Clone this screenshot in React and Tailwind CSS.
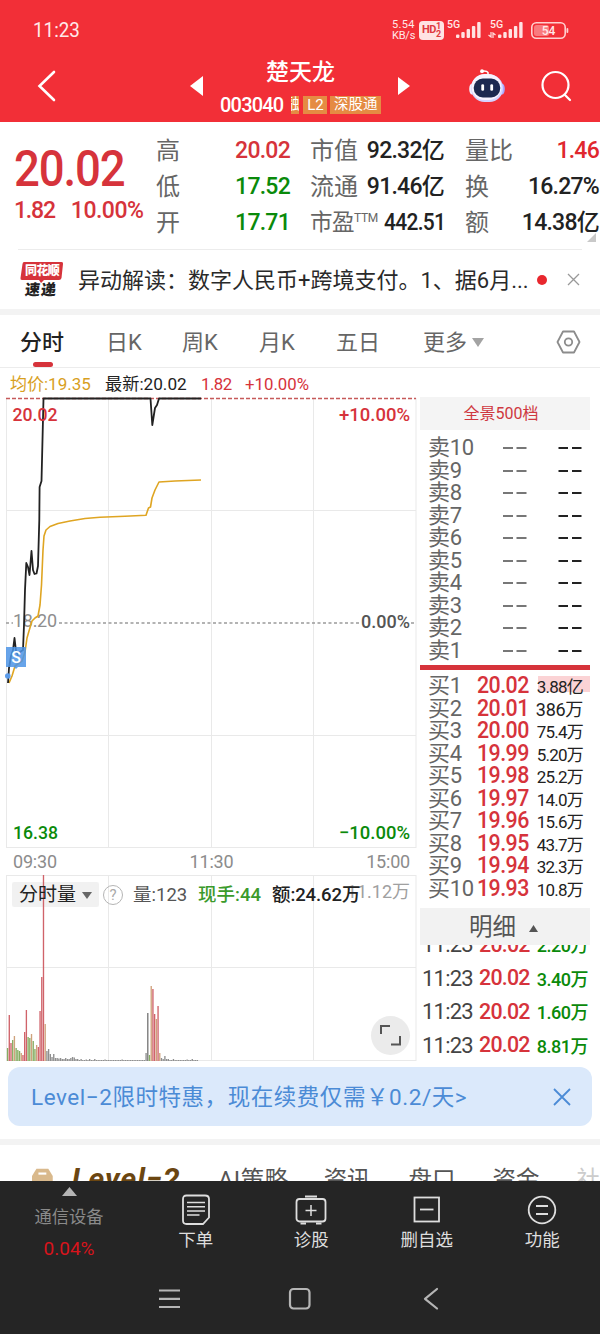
import React from 'react';

const sellRows = [10, 9, 8, 7, 6, 5, 4, 3, 2, 1];

const buyRows = [
  { price: '20.02', vol: '3.88亿' },
  { price: '20.01', vol: '386万' },
  { price: '20.00', vol: '75.4万' },
  { price: '19.99', vol: '5.20万' },
  { price: '19.98', vol: '25.2万' },
  { price: '19.97', vol: '14.0万' },
  { price: '19.96', vol: '15.6万' },
  { price: '19.95', vol: '43.7万' },
  { price: '19.94', vol: '32.3万' },
  { price: '19.93', vol: '10.8万' },
];

const trades = ['2.20万', '3.40万', '1.60万', '8.81万'];

const RED = '#d0636a';
const GREEN = '#86ad62';
const GRAY = '#8f8f8f';
const TAN = '#cfa27c';

// one bar per minute: [height, color]
const volumes = [
  [13, GREEN], [46, RED], [18, RED], [21, GREEN], [25, TAN], [13, GREEN], [11, GREEN], [10, GREEN],
  [8, TAN], [6, RED], [29, RED], [51, RED], [24, GREEN], [23, GREEN], [27, TAN], [20, GREEN],
  [12, GREEN], [16, TAN], [14, RED], [50, RED], [84, RED], [186, RED], [37, TAN], [10, GRAY],
  [12, GRAY], [7, GRAY], [4, GRAY], [7, GRAY], [3, GRAY], [3, GRAY], [2.5, GRAY], [3, GRAY],
  [2, GRAY], [2, GRAY], [3, GRAY], [2, GRAY], [2, GRAY], [3, GRAY], [4, GRAY], [3.5, GRAY],
  [2, GRAY], [2, GRAY], [1, GRAY], [2, GRAY], [1, GRAY], [1, GRAY], [1.5, GRAY], [1, GRAY],
  [2, GRAY], [1, GRAY], [1, GRAY], [2, GRAY], [1, GRAY], [1, GRAY], [1, GRAY], [1, GRAY],
  [1, GRAY], [1.5, GRAY], [1, GRAY], [1, GRAY], [1, GRAY], [1, GRAY], [1, GRAY], [1, GRAY],
  [1, GRAY], [1, GRAY], [1, GRAY], [1.5, GRAY], [1, GRAY], [1, GRAY], [1, GRAY], [1, GRAY],
  [1, GRAY], [1, GRAY], [1, GRAY], [1, GRAY], [1, GRAY], [1, GRAY], [1, GRAY], [1, GRAY],
  [1, GRAY], [8, GRAY], [48, '#777777'], [6, GREEN], [75, TAN], [72, RED], [47, RED], [42, TAN],
  [55, RED], [8, TAN], [3, GRAY], [2, GRAY], [5, GRAY], [2, GRAY], [2, GRAY], [1, GRAY],
  [1, GRAY], [2, GRAY], [1, GRAY], [1, GRAY], [1, GRAY], [1, GRAY], [1, GRAY], [1, GRAY],
  [1, GRAY], [1.5, GRAY], [1, GRAY], [1, GRAY], [2, GRAY], [1, GRAY], [1, GRAY], [1, GRAY],
];

const Signal = () => (
  <svg width="26" height="16" viewBox="0 0 26 16" fill="#ffe3e3">
    <rect x="0" y="12.5" width="3.4" height="3.5" rx="1" />
    <rect x="5.3" y="10" width="3.4" height="6" rx="1" />
    <rect x="10.6" y="7" width="3.4" height="9" rx="1" />
    <rect x="15.9" y="4" width="3.4" height="12" rx="1" />
    <rect x="21.2" y="0" width="3.4" height="16" rx="1" />
  </svg>
);

const StatusBar = () => (
  <div className="flex h-[60px] items-center pl-[33px] text-[#ffe9e9]">
    <span className="origin-left scale-x-[0.94] text-[20px]">11:23</span>
    <div className="ml-auto flex w-[208px] items-center">
      <div className="w-[24px] pt-px text-[11px] leading-[10.5px] whitespace-nowrap">
        <div className="tracking-[0.3px]">5.54</div>
        <div className="tracking-[-0.2px]">KB/s</div>
      </div>
      <div className="ml-[3px] flex h-[19px] w-[25px] items-center justify-center rounded-[4px] bg-[#ffe3e3] text-[#e03a40]">
        <span className="text-[11px] font-bold tracking-[-0.5px]">HD</span>
        <span className="text-[9px] leading-[8px] font-bold">
          1<br />2
        </span>
      </div>
      <div className="relative ml-[12px] h-[19px] w-[26px] pt-px">
        <span className="absolute -top-[1px] -left-[9px] text-[10.5px] leading-[10px] font-medium">5G</span>
        <Signal />
      </div>
      <div className="relative ml-[16px] h-[19px] w-[26px] pt-px">
        <span className="absolute -top-[1px] -left-[8px] text-[10.5px] leading-[10px] font-medium">5G</span>
        <svg className="absolute top-[11px] -left-[10px]" width="8" height="6" viewBox="0 0 8 6" stroke="#ffe3e3" strokeWidth="1.2" fill="none">
          <path d="M3 0v5L0.5 3M5 6V1L7.5 3" />
        </svg>
        <Signal />
      </div>
      <svg className="ml-[7px]" width="38" height="17" viewBox="0 0 38 17">
        <rect x="0.8" y="0.8" width="33.4" height="15.4" rx="4.5" fill="none" stroke="#ffd0d0" strokeWidth="1.6" />
        <rect x="3" y="3" width="15" height="11" rx="2.5" fill="#f97a7e" />
        <rect x="35.5" y="6" width="1.8" height="5" rx="0.9" fill="#ffd0d0" />
        <text x="17.5" y="12.6" fontSize="12" fontWeight="500" textAnchor="middle" fill="#ffe9e9">54</text>
      </svg>
    </div>
  </div>
);

const Robot = () => (
  <svg width="36" height="34" viewBox="0 0 36 34">
    <path d="M19 6V3.5Q18 1.5 13 2" fill="none" stroke="#fff" strokeWidth="1.5" />
    <circle cx="13" cy="2.2" r="1.9" fill="#fff" />
    <ellipse cx="3" cy="20" rx="2.8" ry="5.5" fill="#f1efff" />
    <ellipse cx="33" cy="20" rx="2.8" ry="5.5" fill="#a9a9ff" />
    <rect x="2" y="5.5" width="32" height="27.5" rx="13.5" fill="#d5d3ff" />
    <rect x="2.5" y="5" width="30" height="26" rx="13" fill="#f6f4ff" />
    <rect x="4.8" y="9.5" width="26.4" height="19" rx="9" fill="#1c2950" />
    <rect x="12.3" y="15.2" width="2.8" height="6.6" rx="1.3" fill="#fff" />
    <rect x="21.3" y="15.2" width="2.8" height="6.6" rx="1.3" fill="#fff" />
  </svg>
);

const Header = () => (
  <header className="h-[122px] bg-[#f22f37]">
    <StatusBar />
    <div className="flex h-[52px] items-center text-white">
      <svg className="ml-[37px]" width="19" height="32" viewBox="0 0 19 32" fill="none" stroke="#fff" strokeWidth="2.6" strokeLinecap="round">
        <path d="M17 2L2.5 16L17 30" />
      </svg>
      <svg className="ml-[134px]" width="13" height="20" viewBox="0 0 13 20" fill="#fff">
        <path d="M13 0v20L0 10z" />
      </svg>
      <div className="ml-[17px] w-[161px] pt-[6px]">
        <div className="text-center text-[23px] leading-[32px] font-medium">楚天龙</div>
        <div className="flex h-[32px] items-center">
          <span className="w-[71px] text-[20px] font-medium tracking-[-0.8px]">003040</span>
          <span className="flex h-[18px] w-[9px] justify-end overflow-hidden bg-[#e58b43] text-[15px] leading-[17px]">融</span>
          <span className="ml-[4px] h-[18px] w-[24px] bg-[#e58b43] text-center text-[15px] leading-[18px]">L2</span>
          <span className="ml-[3px] h-[18px] w-[51px] bg-[#e58b43] text-center text-[14.5px] leading-[17px] whitespace-nowrap">深股通</span>
        </div>
      </div>
      <svg className="ml-[17px]" width="12" height="18" viewBox="0 0 12 18" fill="#fff">
        <path d="M0 0v18L12 9z" />
      </svg>
      <div className="ml-[59px]">
        <Robot />
      </div>
      <svg className="ml-[36px]" width="31" height="32" viewBox="0 0 31 32" fill="none" stroke="#fff" strokeWidth="2.2" strokeLinecap="round">
        <circle cx="14.5" cy="15" r="13" />
        <path d="M24 25l5 5" />
      </svg>
    </div>
  </header>
);

const Stat = ({ label, sup, value, color = 'text-[#222]' }) => (
  <div className="flex h-[36px] items-center justify-between whitespace-nowrap">
    {sup ? (
      <span className="text-[22.5px] tracking-[-0.5px] text-[#666]">
        {label}
        <sup className="top-[-8px] text-[12px] leading-none tracking-[-0.3px]">{sup}</sup>
      </span>
    ) : (
      <span className="text-[24px] text-[#666]">{label}</span>
    )}
    <span
      className={`origin-right font-medium ${sup ? 'scale-x-[0.91] text-[23px] tracking-[-0.75px]' : 'text-[23px] tracking-[-0.75px]'} ${color}`}
    >
      {value}
    </span>
  </div>
);

const Quote = () => (
  <section className="relative h-[127px]">
    <div className="flex pt-[10px]">
      <div className="ml-[14px] w-[142px] pt-[12px] text-[#d6333b]">
        <div className="origin-left scale-x-[0.91] text-[50px] leading-[50px] font-medium tracking-[-1.2px]">20.02</div>
        <div className="mt-[3px] flex gap-[16px] text-[23px] leading-[28px] font-medium">
          <span className="tracking-[-1.2px]">1.82</span>
          <span className="tracking-[-0.5px]">10.00%</span>
        </div>
      </div>
      <div className="w-[134px] pt-px">
        <Stat label="高" value="20.02" color="text-[#d6333b]" />
        <Stat label="低" value="17.52" color="text-[#0a8a0a]" />
        <Stat label="开" value="17.71" color="text-[#0a8a0a]" />
      </div>
      <div className="ml-[20px] w-[134px] pt-px">
        <Stat label="市值" value="92.32亿" />
        <Stat label="流通" value="91.46亿" />
        <Stat label="市盈" sup="TTM" value="442.51" />
      </div>
      <div className="ml-[21px] w-[134px] pt-px">
        <Stat label="量比" value="1.46" color="text-[#e0272e]" />
        <Stat label="换" value="16.27%" />
        <Stat label="额" value="14.38亿" />
      </div>
    </div>
    <svg className="absolute right-[4px] bottom-[7px]" width="9" height="9" viewBox="0 0 9 9">
      <path d="M9 0v9H0z" fill="#c9c9c9" />
    </svg>
  </section>
);

const News = () => (
  <section className="flex h-[60px] items-center">
    <div className="mx-[18px] flex h-full flex-1 items-center border-t border-[#ececec]">
      <div className="relative ml-[2px] h-[38px] w-[44px]">
        <svg className="absolute inset-0" width="44" height="38" viewBox="0 0 44 38">
          <path d="M4 1H41.5Q43.5 1 43 3L41.5 17Q41 19 39 19H24L21 22L19 19H2Q0 19 0.5 17L2.5 3Q2.8 1 4 1z" fill="#d6333b" />
        </svg>
        <span className="absolute top-[2px] left-[5px] text-[12px] leading-[16px] font-black tracking-[-0.6px] whitespace-nowrap text-white">同花顺</span>
        <span className="absolute top-[21px] left-[5px] -skew-x-6 text-[15px] leading-[16px] font-black tracking-[1px] whitespace-nowrap text-[#222]">速递</span>
      </div>
      <span className="ml-[14px] w-[452px] pt-[2px] text-[22px] whitespace-nowrap text-[#2a2a2a]">
        异动解读：数字人民币+跨境支付。1、据6月...
      </span>
      <span className="ml-[7px] h-[10px] w-[10px] rounded-full bg-[#e8272e]" />
      <svg className="ml-[20px]" width="13" height="13" viewBox="0 0 13 13" stroke="#999" strokeWidth="1.3">
        <path d="M1 1l11 11M12 1L1 12" />
      </svg>
    </div>
  </section>
);

const Tabs = () => (
  <nav className="flex h-[53px] items-center border-b border-[#ececec] pt-[2px] text-[22px] whitespace-nowrap text-[#666]">
    <div className="relative ml-[20px] w-[86px] font-medium text-[#222]">
      分时
      <span className="absolute top-[36px] left-[13px] h-[5px] w-[20px] rounded-full bg-[#d6333b]" />
    </div>
    <span className="w-[76px]">日K</span>
    <span className="w-[77px]">周K</span>
    <span className="w-[77px]">月K</span>
    <span className="w-[87px]">五日</span>
    <span>更多</span>
    <svg className="ml-[5px]" width="12" height="9" viewBox="0 0 12 9">
      <path d="M0 0h12L6 9z" fill="#a3a3a3" />
    </svg>
    <svg className="mr-[19px] ml-auto" width="25" height="24" viewBox="0 0 25 24" fill="none" stroke="#8c8c8c" strokeWidth="1.8" strokeLinejoin="round">
      <path d="M7 1.5h11L23.5 12L18 22.5H7L1.5 12z" />
      <circle cx="12.5" cy="12" r="3.7" />
    </svg>
  </nav>
);

const PriceChart = () => (
  <svg className="block" width="418" height="451" viewBox="0 397 418 451">
    <g stroke="#e9e9e9">
      <path d="M6.5 398V848M108.5 398V848M211.5 398V848M313.5 398V848M416 398V848" />
      <path d="M6 510.5H416M6 735.5H416M6 847.5H416" />
    </g>
    <path d="M6 398.5H416" stroke="#c65a5a" strokeDasharray="4 2" strokeWidth="1.3" />
    <path d="M6 623H13M59 623H361M411 623H416" stroke="#9a9a9a" strokeDasharray="3 2.5" strokeWidth="1.3" />
    <text x="13" y="627" fontSize="18" fill="#8e8e8e" textLength="44">18.20</text>
    <path
      d="M9 683L12 676L15 666L22 661L25 652L27 638L29 631L32 621L35 618L38 616L40 605L41.5 585L43 550L44 536L46 530L50 526.5L58 523.5L70 521L85 518.5L100 517.3L125 516.3L146 515.3L148.5 508L150.5 507L152 498L155 490L159 482L175 481L201 480"
      fill="none" stroke="#dfa522" strokeWidth="1.6" strokeLinejoin="round"
    />
    <path
      d="M8 683L9 668L11 656L13 650L14.5 638L16 651L18 655L20 652L23 650L24 625L25 590L26.3 563L28 567L29.5 575L31.5 551L33 570L34.5 574L36.5 573.5L38 566L39.3 520L39.6 487L41.5 481L43.5 398.5H150.5L152.3 425L155 408L157 405L159 398.5H201"
      fill="none" stroke="#222" strokeWidth="1.8" strokeLinejoin="round"
    />
    <circle cx="7.8" cy="676" r="2.8" fill="#5b9bea" />
    <path d="M6 647H26V667H18L16 669L14 667H6z" fill="#4c94e6" opacity="0.85" />
    <text x="16" y="663" fontSize="16" fontWeight="500" fill="#fff" textAnchor="middle">S</text>
    <g fontSize="18.5" fontWeight="500">
      <text x="12.5" y="421" fill="#d6333b" textLength="45" lengthAdjust="spacingAndGlyphs">20.02</text>
      <text x="339" y="421" fill="#d6333b" textLength="71" lengthAdjust="spacingAndGlyphs">+10.00%</text>
      <text x="361" y="627.5" fill="#555" textLength="49" fontSize="17.5" lengthAdjust="spacingAndGlyphs">0.00%</text>
      <text x="13" y="839" fill="#0a8a0a" textLength="45" lengthAdjust="spacingAndGlyphs">16.38</text>
      <text x="339" y="839" fill="#0a8a0a" textLength="71" lengthAdjust="spacingAndGlyphs">−10.00%</text>
    </g>
  </svg>
);

const VolumeChart = () => (
  <div className="relative h-[186px] w-[418px]">
    <svg className="block" width="418" height="186" viewBox="0 875 418 186">
      <path d="M6 875.5H416M6 967.5H416M6 1060.5H416M6.5 875V1061M108.5 875V1061M211.5 875V1061M313.5 875V1061M416 875V1061" stroke="#e9e9e9" />
      <rect x="12" y="882" width="87" height="25" rx="2" fill="#f0f0f0" opacity="0.9" />
      {volumes.map(([h, color], i) => (
        <rect key={i} x={6.9 + i * 1.71} y={1061 - h} width="1.35" height={h} fill={color} />
      ))}
    </svg>
    <div className="absolute inset-x-0 top-[7px] flex h-[26px] items-center text-[18.5px] whitespace-nowrap">
      <span className="ml-[19px] w-[63px] text-[19px] text-[#222]">分时量</span>
      <svg width="10" height="7" viewBox="0 0 10 7">
        <path d="M0 0h10L5 7z" fill="#666" />
      </svg>
      <span className="ml-[11px] flex h-[20px] w-[20px] items-center justify-center rounded-full border-[1.5px] border-[#b5b5b5] text-[15px] text-[#aaa]">?</span>
      <span className="ml-[10px] w-[65px] pt-px text-[#555]">量:123</span>
      <span className="w-[74px] pt-px font-medium text-[#3b9a2b]">现手:44</span>
      <span className="pt-px font-medium tracking-[-0.1px] text-[#222]">额:24.62万</span>
    </div>
    <span className="absolute top-[3px] right-[8px] -z-10 text-[18px] text-[#a0a0a0]">11.12万</span>
    <div className="absolute right-[8px] bottom-[6px] flex h-[39px] w-[39px] items-center justify-center rounded-full bg-[#ebebeb]">
      <svg width="21" height="21" viewBox="0 0 21 21" fill="none" stroke="#555" strokeWidth="2">
        <path d="M1 9V1H10M20 11V19.5H11" />
      </svg>
    </div>
  </div>
);

const OrderBook = () => (
  <aside className="flex h-[664px] w-[170px] flex-col whitespace-nowrap">
    <div className="h-[33px] shrink-0 bg-[#f4f4f4] text-center text-[16px] leading-[34px] text-[#cf3840]">
      <span className="mr-[8px]">全景500档</span>
    </div>
    <div className="mt-[7px]">
      {sellRows.map((n) => (
        <div key={n} className="flex h-[22.5px] items-center pl-[8px]">
          <span className="w-[74px] text-[22px] leading-[22px] tracking-[-0.3px] text-[#666]">卖{n}</span>
          <svg width="80" height="2" viewBox="0 0 80 2">
            <path d="M1 1h10M14.5 1h10" stroke="#777" strokeWidth="1.8" />
            <path d="M56.5 1h9.5M70 1h9.5" stroke="#222" strokeWidth="1.8" />
          </svg>
        </div>
      ))}
    </div>
    <div className="mt-[3px] h-[5px] shrink-0 bg-[#d6333b]" />
    <div className="mt-[5px]">
      {buyRows.map((row, i) => (
        <div key={i} className="relative flex h-[22.5px] items-center pl-[8px]">
          {i === 0 && <span className="absolute top-[1px] right-0 -z-10 h-[16px] w-[52px] bg-[#fbd3d5]" />}
          <span className="w-[49px] text-[22px] leading-[22px] tracking-[-0.3px] text-[#666]">买{i + 1}</span>
          <span className="w-[58px] origin-left scale-x-[0.93] text-[23px] leading-[22px] font-medium tracking-[-0.6px] text-[#d6333b]">{row.price}</span>
          <span className={`w-[48px] pt-[2px] text-right leading-[20px] text-[#222] ${i === 1 ? 'text-[18px] tracking-[-0.3px]' : 'text-[17px] tracking-[-0.8px]'}`}>{row.vol}</span>
        </div>
      ))}
    </div>
    <div className="mt-[8px] flex h-[37px] shrink-0 items-center bg-[#f2f2f2] pt-[3px] pl-[49px] text-[23.5px] text-[#555]">
      明细
      <svg className="ml-[13px]" width="9" height="7" viewBox="0 0 9 7">
        <path d="M0 7h9L4.5 0z" fill="#555" />
      </svg>
    </div>
    <div className="flex h-[117px] shrink-0 flex-col justify-end overflow-hidden">
      {trades.map((vol) => (
        <div key={vol} className="flex h-[33.5px] shrink-0 items-center pl-[2px]">
          <span className="w-[57px] text-[22px] tracking-[-0.8px] text-[#444]">11:23</span>
          <span className="w-[55px] origin-left scale-x-[0.95] text-[22.5px] font-medium tracking-[-0.8px] text-[#d6333b]">20.02</span>
          <span className="w-[54px] pt-[2px] text-right text-[18px] font-medium tracking-[-0.5px] text-[#0a8a0a]">{vol}</span>
        </div>
      ))}
    </div>
  </aside>
);

const ChartArea = () => (
  <section className="relative z-0">
    <div className="flex h-[29px] items-center pt-[5px] text-[16.8px] whitespace-nowrap">
      <span className="ml-[10px] w-[95px] text-[17px] text-[#d8a01e]">均价:19.35</span>
      <span className="w-[96px] text-[17.2px] text-[#222]">最新:20.02</span>
      <span className="w-[44px] tracking-[-0.5px] text-[#d6333b]">1.82</span>
      <span className="text-[#d6333b]">+10.00%</span>
    </div>
    <div className="flex h-[664px] gap-[2px]">
      <div className="w-[418px]">
        <PriceChart />
        <div className="flex h-[27px] items-center justify-between pr-[8px] pl-[13px] text-[18px] tracking-[-0.2px] text-[#8c8c8c]">
          <span>09:30</span>
          <span>11:30</span>
          <span>15:00</span>
        </div>
        <VolumeChart />
      </div>
      <OrderBook />
    </div>
  </section>
);

const Promo = () => (
  <div className="mx-[8px] mt-[6px] flex h-[59px] items-center justify-between rounded-[12px] bg-[#dbe9fb] pr-[21px] pl-[23px] text-[#4b8bd6]">
    <span className="pt-[3px] text-[22.5px] tracking-[0.55px] whitespace-nowrap">Level−2限时特惠，现在续费仅需￥0.2/天&gt;</span>
    <svg width="18" height="18" viewBox="0 0 18 18" stroke="#4b8bd6" strokeWidth="1.8">
      <path d="M1 1l16 16M17 1L1 17" />
    </svg>
  </div>
);

const SubTabs = () => (
  <div className="flex h-[36px] items-start overflow-hidden text-[23.5px] whitespace-nowrap text-[#555]">
    <svg className="mt-[23px] ml-[32px]" width="21" height="24" viewBox="0 0 21 24">
      <path d="M4.5 0.5h12L21 8v12H0V8z" fill="#d9b98c" />
      <path d="M6.5 5.5h8" stroke="#fff" strokeWidth="2.2" />
    </svg>
    <span className="mt-[16px] ml-[19px] w-[148px] text-[30px] leading-[36px] font-bold tracking-[1px] text-[#6b4611] italic">Level−2</span>
    <span className="mt-[18px] w-[107px] tracking-[0.5px]">AI策略</span>
    <span className="mt-[18px] w-[86px]">资讯</span>
    <span className="mt-[18px] w-[85px]">盘口</span>
    <span className="mt-[18px] w-[85px]">资金</span>
    <span className="mt-[18px] text-[#ccc]">社</span>
  </div>
);

const BottomItem = ({ label, children }) => (
  <div className="flex w-[115.5px] flex-col items-center text-[17.5px] text-[#dedede]">
    <svg className="mt-[12px]" width="34" height="34" viewBox="0 0 34 34" fill="none" stroke="#dedede" strokeWidth="1.8">
      {children}
    </svg>
    <span className="leading-[26px]">{label}</span>
  </div>
);

const BottomBar = () => (
  <footer className="h-[153px] bg-[#252525]">
    <div className="flex h-[84px]">
      <div className="flex w-[138px] flex-col items-center text-[17.3px]">
        <svg className="mt-[6px]" width="15" height="9" viewBox="0 0 15 9">
          <path d="M7.5 0L15 9H0z" fill="#b5b5b5" />
        </svg>
        <span className="mt-[8px] leading-[26px] text-[#8a8a8a]">通信设备</span>
        <span className="mt-[6px] text-[19px] leading-[26px] text-[#d8141c]">0.04%</span>
      </div>
      <BottomItem label="下单">
        <path d="M7.5 2.5H26Q30 2.5 30 6V24.5L24 31H7.5Q4 31 4 27.5V6Q4 2.5 7.5 2.5z" />
        <path d="M8 9.5H26M8 13.7H26M8 17.9H26M8 22H20.5" strokeWidth="1.5" />
      </BottomItem>
      <BottomItem label="诊股">
        <rect x="2.5" y="6" width="29" height="22.5" rx="3" />
        <path d="M11 3.5H23M6.5 30.5H12M22 30.5H27.5" strokeWidth="2" />
        <path d="M17 12v11M11.5 17.5h11" strokeWidth="1.5" />
      </BottomItem>
      <BottomItem label="删自选">
        <rect x="4.5" y="4.5" width="24.5" height="24" />
        <path d="M10 16.5h13.5" />
      </BottomItem>
      <BottomItem label="功能">
        <circle cx="17" cy="17" r="13.3" />
        <path d="M11 13h12M11 21h12" />
      </BottomItem>
    </div>
    <div className="flex h-[69px] items-center justify-center pb-px">
      <svg width="284" height="24" viewBox="0 0 284 24" fill="none" stroke="#b5b5b5" strokeWidth="2.2">
        <path d="M1 3.5h21M1 11.8h21M1 20h21" />
        <rect x="132" y="2" width="19.5" height="19.5" rx="3.5" />
        <path d="M279 2L267 11.8L279 21.5" strokeLinecap="round" strokeLinejoin="round" />
      </svg>
    </div>
  </footer>
);

export default function App() {
  return (
    <div className="h-[1334px] w-[600px] overflow-hidden bg-white font-['Roboto','Noto_Sans_CJK_SC',sans-serif]">
      <Header />
      <Quote />
      <News />
      <div className="h-[6px] bg-[#f3f3f3]" />
      <Tabs />
      <ChartArea />
      <Promo />
      <div className="mt-[13px] h-[6px] bg-[#f3f3f3]" />
      <SubTabs />
      <BottomBar />
    </div>
  );
}
